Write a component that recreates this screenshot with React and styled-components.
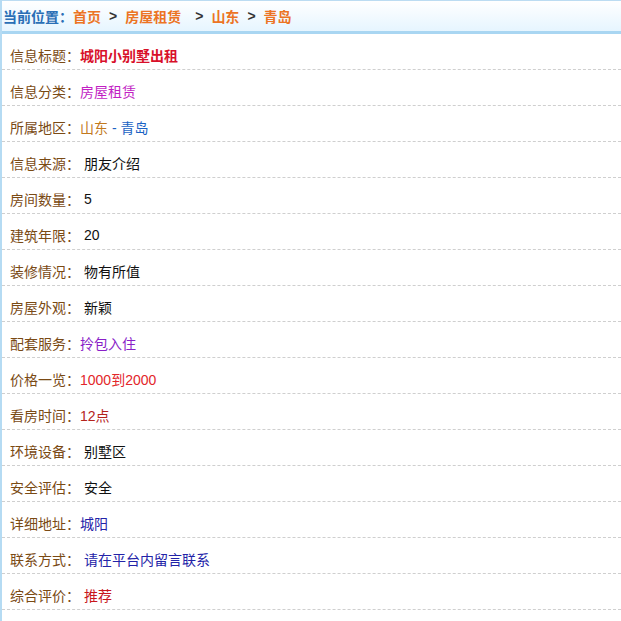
import React from 'react';
import styled, { createGlobalStyle } from 'styled-components';

const GlobalStyle = createGlobalStyle`
   html, body {
      margin: 0;
      padding: 0;
      background: #fff;
      font-family: "Liberation Sans", "Noto Sans CJK SC", sans-serif;
   }
`;

const rows = [
   { label: '信息标题', value: '城阳小别墅出租', tone: 'title' },
   { label: '信息分类', value: '房屋租赁', tone: 'category' },
   { label: '所属地区', region: ['山东', '青岛'] },
   { label: '信息来源', value: '朋友介绍', tone: 'plain', spaced: true },
   { label: '房间数量', value: '5', tone: 'plain', spaced: true },
   { label: '建筑年限', value: '20', tone: 'plain', spaced: true },
   { label: '装修情况', value: '物有所值', tone: 'plain', spaced: true },
   { label: '房屋外观', value: '新颖', tone: 'plain', spaced: true },
   { label: '配套服务', value: '拎包入住', tone: 'purple' },
   { label: '价格一览', value: '1000到2000', tone: 'price' },
   { label: '看房时间', value: '12点', tone: 'darkred' },
   { label: '环境设备', value: '别墅区', tone: 'plain', spaced: true },
   { label: '安全评估', value: '安全', tone: 'plain', spaced: true },
   { label: '详细地址', value: '城阳', tone: 'navy' },
   { label: '联系方式', value: '请在平台内留言联系', tone: 'navy', spaced: true },
   { label: '综合评价', value: '推荐', tone: 'red', spaced: true },
];

const tones = {
   title: '#d8102a',
   category: '#c21fc4',
   plain: '#111',
   purple: '#8a1fc8',
   price: '#e3262a',
   darkred: '#b4241c',
   navy: '#2323a8',
   red: '#c8161c',
};

const App = () => {
   return (
      <>
         <GlobalStyle />
         <StyledPage>
            <StyledCrumbs>
               <span className="here">当前位置：</span>
               <a>首页</a>
               <span className="sep">&gt;</span>
               <a>房屋租赁</a>
               <span className="sep wide">&gt;</span>
               <a>山东</a>
               <span className="sep">&gt;</span>
               <a>青岛</a>
            </StyledCrumbs>
            <StyledList>
               {rows.map((r) => (
                  <StyledRow key={r.label}>
                     <StyledLabel>{r.label}：</StyledLabel>
                     {r.region ? (
                        <StyledValue>
                           <span style={{ color: '#c2791e' }}>{r.region[0]}</span>
                           <span style={{ color: '#1b63c4' }}> - {r.region[1]}</span>
                        </StyledValue>
                     ) : (
                        <StyledValue $tone={r.tone} $spaced={r.spaced}>{r.value}</StyledValue>
                     )}
                  </StyledRow>
               ))}
            </StyledList>
         </StyledPage>
      </>
   );
};

const StyledPage = styled.div`
   width: 621px;
   min-height: 621px;
   border-left: 2px solid #b5dbf3;
   box-sizing: border-box;
`;

const StyledCrumbs = styled.div`
   display: flex;
   align-items: center;
   height: 30px;
   padding-left: 1px;
   background: linear-gradient(#ffffff, #e6f5ff);
   border-top: 1px solid #bcdcf2;
   border-bottom: 3px solid #a9d6f2;
   font-size: 14px;
   font-weight: bold;

   .here {
      color: #2a6fb6;
   }

   a {
      color: #ec7424;
      text-decoration: none;
   }

   .sep {
      color: #333;
      margin: 0 8px;
   }

   .wide {
      margin-left: 14px;
   }
`;

const StyledList = styled.div`
   display: flex;
   flex-direction: column;
`;

const StyledRow = styled.div`
   display: flex;
   align-items: center;
   height: 36px;
   padding: 7px 0 0 8px;
   box-sizing: border-box;
   border-bottom: 1px dashed #cfcfcf;
   font-size: 14px;
`;

const StyledLabel = styled.span`
   color: #7a4a14;
`;

const StyledValue = styled.span`
   color: ${({ $tone }) => tones[$tone] || '#111'};
   font-weight: ${({ $tone }) => ($tone === 'title' ? 'bold' : 'normal')};
   margin-left: ${({ $spaced }) => ($spaced ? '4px' : '0')};
`;

export default App;
